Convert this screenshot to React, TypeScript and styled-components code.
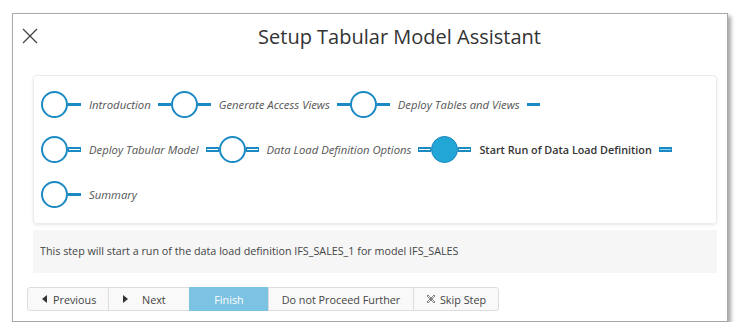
import React, { FC } from "react";
import styled, { createGlobalStyle } from "styled-components";

const GlobalStyle = createGlobalStyle`
  body {
    margin: 0;
    background: #ffffff;
    font-family: "Open Sans", "Liberation Sans", sans-serif;
    color: #333333;
  }
`;

const Page = styled.div`
  padding: 13px 0 0 12px;
`;

const Dialog = styled.div`
  width: 714px;
  height: 307px;
  background: #ffffff;
  border: 1px solid #a9a9a9;
  box-shadow: 3px 3px 4px rgba(0, 0, 0, 0.35);
  display: flex;
  flex-direction: column;
`;

const Header = styled.div`
  display: flex;
  align-items: center;
  height: 44px;
  padding-left: 9px;
`;

const CloseButton = styled.div`
  width: 16px;
  height: 16px;
  cursor: pointer;
  margin-right: 34px;
  display: flex;
`;

const Title = styled.h1`
  flex: 1;
  margin: 0;
  text-align: center;
  font-size: 20px;
  font-weight: 400;
  color: #333333;
`;

const Body = styled.div`
  padding: 17px 10px 0 20px;
  display: flex;
  flex-direction: column;
  gap: 6px;
`;

const StepsCard = styled.div`
  border: 1px solid #ececec;
  border-radius: 4px;
  box-shadow: 0 1px 3px rgba(0, 0, 0, 0.1);
  padding: 15px 7px;
  display: flex;
  flex-direction: column;
  gap: 18px;
`;

const StepRow = styled.div`
  display: flex;
`;

const StepItem = styled.div`
  display: flex;
  align-items: center;
  height: 27px;
`;

const Circle = styled.div<{ $active?: boolean }>`
  box-sizing: border-box;
  width: 27px;
  height: 27px;
  border-radius: 50%;
  border: ${(p) => (p.$active ? "1px solid #1a85bd" : "2px solid #1b8ac4")};
  background: ${(p) => (p.$active ? "#22a6d5" : "#ffffff")};
`;

const Connector = styled.div<{ $outline?: boolean; $fill?: string }>`
  box-sizing: border-box;
  width: 13px;
  height: ${(p) => (p.$outline ? "5px" : "3px")};
  background: ${(p) => (p.$outline ? p.$fill || "#ffffff" : "#1b8ac4")};
  border: ${(p) => (p.$outline ? "1px solid #1b8ac4" : "none")};
  border-top-width: ${(p) => (p.$outline ? "2px" : "0")};
  border-bottom-width: ${(p) => (p.$outline ? "2px" : "0")};
`;

const StepLabel = styled.span<{ $active?: boolean }>`
  margin: 0 7px 0 8px;
  font-size: ${(p) => (p.$active ? "10.8px" : "11.3px")};
  font-style: ${(p) => (p.$active ? "normal" : "italic")};
  font-weight: ${(p) => (p.$active ? 600 : 400)};
  color: ${(p) => (p.$active ? "#333333" : "#555555")};
  white-space: nowrap;
`;

const InfoPanel = styled.div`
  background: #f6f6f6;
  height: 43px;
  line-height: 43px;
  padding: 0 7px;
  font-size: 10.75px;
  color: #444444;
`;

const Footer = styled.div`
  display: flex;
  padding: 14px 0 0 14px;
`;

const Button = styled.div<{ $primary?: boolean; $width: number }>`
  box-sizing: border-box;
  width: ${(p) => p.$width}px;
  height: 24px;
  display: flex;
  align-items: center;
  justify-content: center;
  gap: 6px;
  font-size: 10.8px;
  color: ${(p) => (p.$primary ? "#ffffff" : "#444444")};
  background: ${(p) => (p.$primary ? "#7cc2e2" : "#f9f9f9")};
  border: 1px solid ${(p) => (p.$primary ? "#7cc2e2" : "#dddddd")};
  margin-left: -1px;
  cursor: pointer;

  &:first-child {
    margin-left: 0;
    border-radius: 3px 0 0 3px;
  }
  &:last-child {
    border-radius: 0 3px 3px 0;
  }
`;

const ArrowButton = styled(Button)`
  justify-content: flex-start;
  padding-left: 14px;
`;

type Step = {
  label: string;
  outline?: boolean;
  active?: boolean;
};

const rows: Step[][] = [
  [
    { label: "Introduction" },
    { label: "Generate Access Views" },
    { label: "Deploy Tables and Views" },
  ],
  [
    { label: "Deploy Tabular Model", outline: true },
    { label: "Data Load Definition Options", outline: true },
    { label: "Start Run of Data Load Definition", outline: true, active: true },
  ],
  [{ label: "Summary" }],
];

const lastLabel = "Summary";

const CloseIcon = () => (
  <svg width="16" height="16" viewBox="0 0 16 16">
    <path d="M1 1 L15 15 M15 1 L1 15" stroke="#444" strokeWidth="1.3" fill="none" />
  </svg>
);

const Triangle: FC<{ dir: "left" | "right" }> = ({ dir }) => (
  <svg width="5" height="8" viewBox="0 0 5 8">
    <polygon points={dir === "left" ? "5,0 0,4 5,8" : "0,0 5,4 0,8"} fill="#333" />
  </svg>
);

const SkipIcon = () => (
  <svg width="10" height="10" viewBox="0 0 10 10">
    <g fill="none" stroke="#666" strokeWidth="0.8">
      <path d="M1 2 L2 1 L9 8 L8 9 Z" />
      <path d="M8 1 L9 2 L2 9 L1 8 Z" />
    </g>
  </svg>
);

const App: FC = () => {
  return (
    <>
      <GlobalStyle />
      <Page>
        <Dialog>
          <Header>
            <CloseButton>
              <CloseIcon />
            </CloseButton>
            <Title>Setup Tabular Model Assistant</Title>
          </Header>
          <Body>
            <StepsCard>
              {rows.map((row, r) => (
                <StepRow key={r}>
                  {row.map((step) => (
                    <StepItem key={step.label}>
                      <Circle $active={step.active} />
                      <Connector $outline={step.outline} />
                      <StepLabel $active={step.active}>{step.label}</StepLabel>
                      {step.label !== lastLabel && (
                        <Connector
                          $outline={step.outline}
                          $fill={step.active ? "#8fd3ef" : undefined}
                        />
                      )}
                    </StepItem>
                  ))}
                </StepRow>
              ))}
            </StepsCard>
            <InfoPanel>
              This step will start a run of the data load definition IFS_SALES_1 for model IFS_SALES
            </InfoPanel>
          </Body>
          <Footer>
            <ArrowButton $width={82}>
              <Triangle dir="left" />
              Previous
            </ArrowButton>
            <ArrowButton $width={82} style={{ gap: 14 }}>
              <Triangle dir="right" />
              Next
            </ArrowButton>
            <Button $width={80} $primary>
              Finish
            </Button>
            <Button $width={146}>Do not Proceed Further</Button>
            <Button $width={86} style={{ gap: 4 }}>
              <SkipIcon />
              Skip Step
            </Button>
          </Footer>
        </Dialog>
      </Page>
    </>
  );
};

export default App;
